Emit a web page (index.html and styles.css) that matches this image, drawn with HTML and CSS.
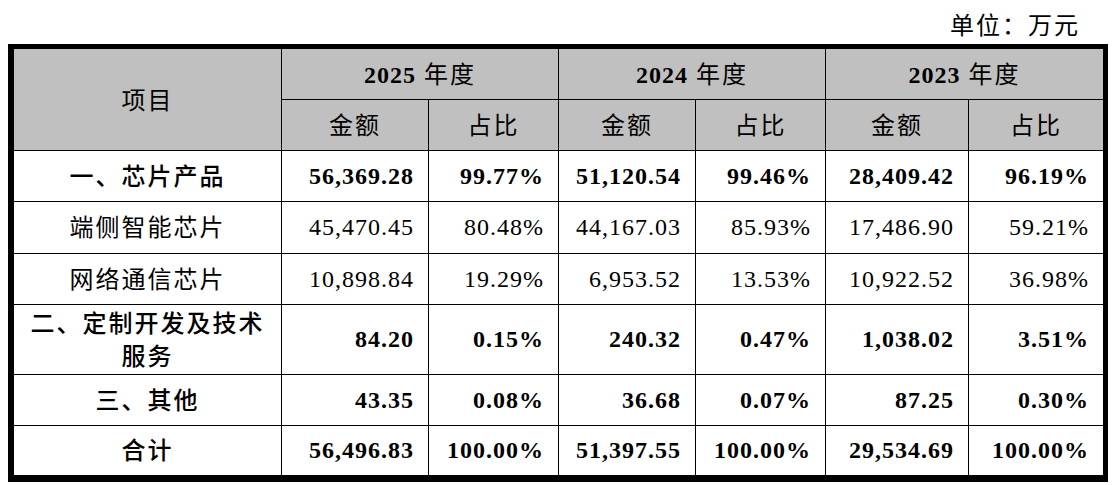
FILE: index.html
```html
<!DOCTYPE html>
<html lang="zh-CN">
<head>
<meta charset="utf-8">
<title>收入构成</title>
<link rel="stylesheet" href="styles.css">
</head>
<body>
<div class="page">
  <div class="unit">单位：万元</div>
  <div class="frame">
    <table class="data">
      <colgroup>
        <col class="c-name"><col class="c-a1"><col class="c-p1"><col class="c-a2"><col class="c-p2"><col class="c-a3"><col class="c-p3">
      </colgroup>
      <thead>
        <tr class="h1">
          <th rowspan="2" class="name">项目</th>
          <th colspan="2"><b class="num">2025</b> 年度</th>
          <th colspan="2"><b class="num">2024</b> 年度</th>
          <th colspan="2" class="last"><b class="num">2023</b> 年度</th>
        </tr>
        <tr class="h2">
          <th>金额</th><th>占比</th><th>金额</th><th>占比</th><th>金额</th><th class="last">占比</th>
        </tr>
      </thead>
      <tbody>
        <tr class="r51 bold">
          <td class="name">一、芯片产品</td>
          <td>56,369.28</td><td>99.77%</td><td>51,120.54</td><td>99.46%</td><td>28,409.42</td><td class="last">96.19%</td>
        </tr>
        <tr class="r52">
          <td class="name">端侧智能芯片</td>
          <td>45,470.45</td><td>80.48%</td><td>44,167.03</td><td>85.93%</td><td>17,486.90</td><td class="last">59.21%</td>
        </tr>
        <tr class="r51">
          <td class="name">网络通信芯片</td>
          <td>10,898.84</td><td>19.29%</td><td>6,953.52</td><td>13.53%</td><td>10,922.52</td><td class="last">36.98%</td>
        </tr>
        <tr class="r70 bold">
          <td class="name">二、定制开发及技术服务</td>
          <td>84.20</td><td>0.15%</td><td>240.32</td><td>0.47%</td><td>1,038.02</td><td class="last">3.51%</td>
        </tr>
        <tr class="r51 bold">
          <td class="name">三、其他</td>
          <td>43.35</td><td>0.08%</td><td>36.68</td><td>0.07%</td><td>87.25</td><td class="last">0.30%</td>
        </tr>
        <tr class="r49 bold end">
          <td class="name">合计</td>
          <td>56,496.83</td><td>100.00%</td><td>51,397.55</td><td>100.00%</td><td>29,534.69</td><td class="last">100.00%</td>
        </tr>
      </tbody>
    </table>
  </div>
</div>
</body>
</html>
```

FILE: styles.css
```css
html, body {
  margin: 0;
  padding: 0;
  background: #ffffff;
}
body {
  padding: 0 8px 8px 8px;
  font-family: "Liberation Serif", "Noto Sans CJK SC", serif;
  color: #000;
}
.page {
  width: 1100px;
}
.unit {
  height: 44px;
  line-height: 52px;
  text-align: right;
  padding-right: 28px;
  font-size: 24px;
  letter-spacing: 2px;
  box-sizing: border-box;
}
.frame {
  border-top: 5px solid #000;
  border-left: 6px solid #000;
  border-right: 5px solid #000;
  border-bottom: 7px solid #000;
  width: 1089px;
}
.data {
  width: 1089px;
  table-layout: fixed;
  border-collapse: separate;
  border-spacing: 0;
}
.c-name { width: 268px; }
.c-a1 { width: 147px; }
.c-p1 { width: 130px; }
.c-a2 { width: 137px; }
.c-p2 { width: 130px; }
.c-a3 { width: 143px; }
.c-p3 { width: 134px; }

.data th, .data td {
  border-right: 1px solid #000;
  border-bottom: 1px solid #000;
  padding: 0 14px 0 4px;
  font-size: 24px;
  letter-spacing: 1px;
  line-height: 33px;
  vertical-align: middle;
}
.data .last { border-right: none; }
.data .end td { border-bottom: none; }

.data th {
  background: #c0c0c0;
  font-weight: normal;
  text-align: center;
  padding: 3px 0 0 0;
  letter-spacing: 2px;
}
.data th .num {
  font-weight: bold;
  letter-spacing: 1px;
}
.data td {
  text-align: right;
}
.data td.name {
  text-align: center;
  padding: 2px 12px 0 12px;
  letter-spacing: 2px;
}
.h1 th { height: 47px; }
.h2 th { height: 47px; }
.r51 td { height: 48px; }
.r52 td { height: 49px; }
.r70 td { height: 67px; }
.r49 td { height: 47px; }
.bold td { font-weight: bold; }
.bold td.name { font-weight: 500; }
```
